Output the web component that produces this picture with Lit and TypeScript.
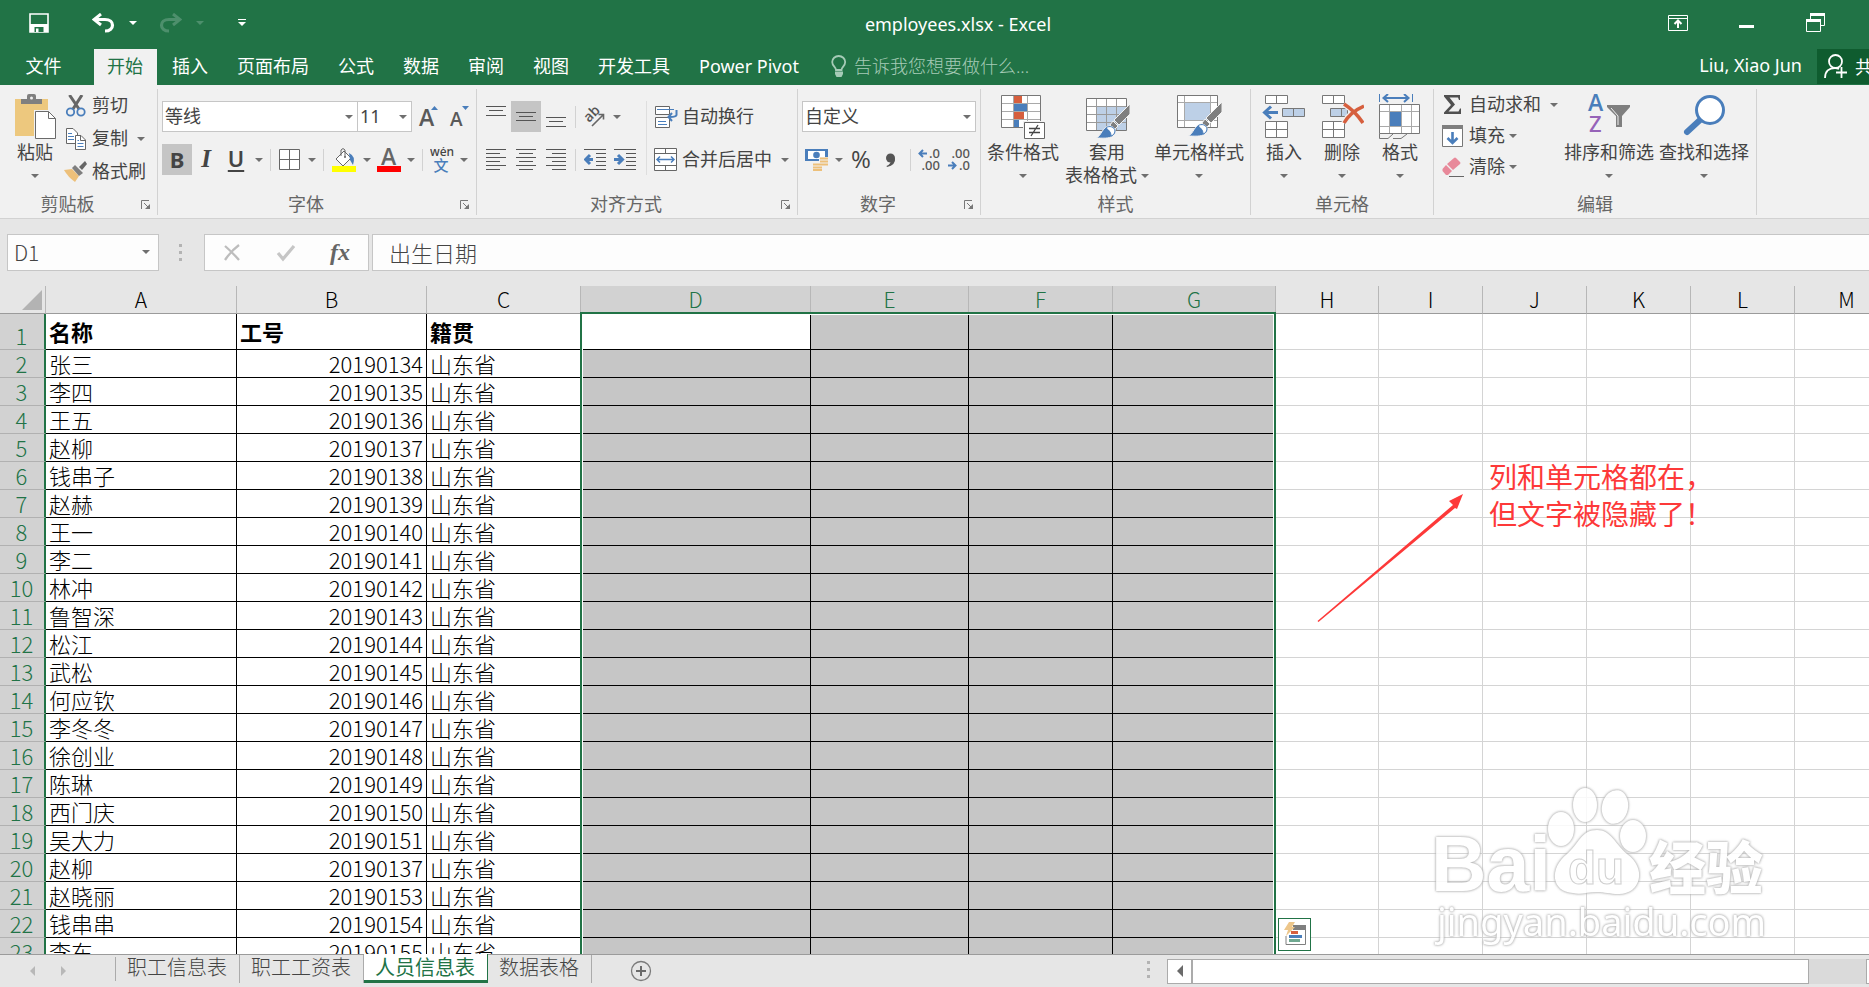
import { LitElement, html, svg, css, nothing, TemplateResult } from "lit";
import { customElement, state } from "lit/decorators.js";
import { classMap } from "lit/directives/class-map.js";

const BLUE = "#4a7ebb";

const icon = (w: number, h: number, body: unknown) =>
  html`<svg width=${w} height=${h} viewBox="0 0 ${w} ${h}" fill="none" aria-hidden="true">${body}</svg>`;

const lines = (rows: number[][], stroke = "#555") =>
  rows.map(([x1, x2, y]) => svg`<path d="M${x1} ${y}.5H${x2}" stroke=${stroke} stroke-width="1"/>`);

const brush = svg`
  <path d="M45 9V19L34 30L29 25Z" fill="#7f7f7f" stroke="#f1f1f1" stroke-width="1"/>
  <path d="M28 26L33 31L29 35L25 30Z" fill="#7f7f7f" stroke="#f1f1f1" stroke-width="1"/>
  <path d="M11 43C17 41 17 31 25 31C31 32 32 38 28 41C24 44 17 43 11 43Z" fill="${BLUE}" stroke="#f1f1f1" stroke-width="1"/>
  <path d="M21 33C24 30 30 32 30 36C30 39 27 41 26 41C26 38 25 36 21 33Z" fill="#fff" stroke="${BLUE}" stroke-width="1"/>`;

const icons: Record<string, TemplateResult> = {
  save: icon(20, 20, svg`<path d="M1 1H19V19H1Z" stroke="#fff" stroke-width="1.6"/><path d="M1 11H19V19H1Z" fill="#fff"/><path d="M5.5 14H14.5V19H5.5Z" fill="#217346"/><path d="M7 15.5H9.500V19H7Z" fill="#fff"/>`),
  undo: icon(23, 20, svg`<path d="M9 1L2 6.500L9 12" stroke="#fff" stroke-width="3"/><path d="M3 6.500H13C23 6.500 23 18 13 18" stroke="#fff" stroke-width="3.200"/>`),
  redo: icon(23, 20, svg`<path d="M14 1L21 6.500L14 12" stroke="#4d8f6c" stroke-width="3"/><path d="M20 6.500H10C0 6.500 0 18 10 18" stroke="#4d8f6c" stroke-width="3.200"/>`),
  custom: icon(8, 8, svg`<path d="M0 .5H8" stroke="#fff"/><path d="M0 3H8L4 7Z" fill="#fff"/>`),
  display: icon(20, 16, svg`<path d="M.5 .5H19.500V15.500H.5ZM.5 3.500H19.500" stroke="#fff"/><path d="M10 13V6M6.500 9L10 5.500L13.500 9" stroke="#fff" stroke-width="2"/>`),
  min: icon(16, 4, svg`<path d="M0 0H15V3H0Z" fill="#fff"/>`),
  restore: icon(20, 20, svg`<path d="M4.500 6V.5H18.500V12.500H15" stroke="#fff"/><path d="M4 0H19V3H4Z" fill="#fff"/><path d="M.5 6.500H14.500V18.500H.5Z" stroke="#fff"/><path d="M0 6H15V9H0Z" fill="#fff"/>`),
  bulb: icon(16, 23, svg`<path d="M5 15C5 12 1.200 11 1.200 7A6.500 6 0 0 1 14.200 7C14.200 11 10.500 12 10.500 15Z" stroke="#a6cbb7" stroke-width="1.800"/><path d="M4 16.500H12V19L10.500 22H5.500L4 19Z" fill="#a6cbb7"/>`),
  person: icon(24, 25, svg`<circle cx="11.500" cy="7.500" r="6.500" stroke="#fff" stroke-width="1.800"/><path d="M1 24C1 17 5 14 11 14C13 14 14 14.500 15 15M12 18.500H23M17.500 13V24" stroke="#fff" stroke-width="1.800"/>`),
  paste: icon(44, 46, svg`<path d="M2 5H35V42H2Z" fill="#edc87e"/><path d="M8 10V5H14V2Q14 0 16 0H21Q23 0 23 2V5H29V10Z" fill="#7f7f7f"/><circle cx="18.500" cy="4" r="1.500" fill="#f1f1f1"/><path d="M21 16H36L44 24V46H21Z" fill="#f1f1f1"/><path d="M22.500 17.500H35.500L42.500 24.500V44.500H22.500Z" fill="#fff" stroke="#6a6a6a"/><path d="M35.500 17.500V24.500H42.500" stroke="#6a6a6a"/>`),
  cut: icon(22, 22, svg`<path d="M4.500 0L14 14M17 0L8 14" stroke="#666" stroke-width="3"/><circle cx="5.500" cy="17" r="3.700" stroke="${BLUE}" stroke-width="1.800"/><circle cx="16" cy="17" r="3.700" stroke="${BLUE}" stroke-width="1.800"/>`),
  copy: icon(22, 22, svg`<path d="M1.500 .5H8L12.500 5V15.500H1.500Z" fill="#fff" stroke="#666"/><path d="M3 5.500H7M3 8.500H9M3 11.500H9" stroke="${BLUE}"/><path d="M10.500 7.500H16L20.500 12V21.500H10.500Z" fill="#fff" stroke="#666"/><path d="M15.500 7.500V12.500H20" stroke="#666"/><path d="M12.500 12.500H14M12.500 15.500H18.500M12.500 18.500H18.500" stroke="${BLUE}"/>`),
  painter: icon(24, 22, svg`<path d="M0 9L8 8L15 15L11 21Q4 16 0 9Z" fill="#edc07a"/><path d="M8 7L11 4L19 12L15 15Z" fill="#7f7f7f"/><path d="M15 6L21 0L23 3L18 9Z" fill="#666"/>`),
  growA: icon(20, 22, svg`<text x="1" y="20" font-size="23" font-weight="600" fill="#595959" font-family="Open Sans, sans-serif">A</text><path d="M13 4L16.500 0L20 4Z" fill="${BLUE}"/>`),
  shrinkA: icon(20, 22, svg`<text x="1" y="20" font-size="19" font-weight="600" fill="#595959" font-family="Open Sans, sans-serif">A</text><path d="M13 0H20L16.500 4Z" fill="${BLUE}"/>`),
  borders: icon(22, 22, svg`<path d="M.5 .5H20.500V20.500H.5Z" fill="#fff" stroke="#666"/><path d="M10.500 1V20M1 10.500H20" stroke="#666"/>`),
  fill: icon(24, 24, svg`<path d="M4 11L12 3L19 10L11 18Z" fill="#fff" stroke="#666"/><path d="M9 8V2Q11 -1 13 2V9" stroke="#666"/><circle cx="13" cy="9" r="1" fill="#666"/><path d="M17 5Q24 8 21 17L18 12Z" fill="${BLUE}"/><path d="M0 18H24V24H0Z" fill="#ff0"/>`),
  color: icon(24, 24, svg`<text x="4" y="17" font-size="23" font-weight="600" fill="#666" font-family="Open Sans, sans-serif">A</text><path d="M0 18H24V24H0Z" fill="#f00"/>`),
  wen: icon(24, 26, svg`<text x="12" y="9" text-anchor="middle" font-size="12" font-weight="500" fill="#444" font-family="Noto Sans, sans-serif">wén</text><text x="11" y="24" text-anchor="middle" font-size="15" font-weight="500" fill="${BLUE}" font-family="Noto Sans CJK SC, sans-serif">文</text>`),
  top: icon(20, 24, lines([[0, 20, 1], [3, 17, 5], [0, 20, 10]])),
  middle: icon(20, 24, lines([[0, 20, 7], [3, 17, 11], [0, 20, 15]])),
  bottom: icon(20, 24, lines([[0, 20, 12], [3, 17, 16], [0, 20, 21]])),
  left: icon(20, 22, lines([[0, 20, 0], [0, 14, 4], [0, 20, 8], [0, 14, 12], [0, 20, 16], [0, 14, 20]])),
  center: icon(20, 22, lines([[0, 20, 0], [3, 17, 4], [0, 20, 8], [3, 17, 12], [0, 20, 16], [3, 17, 20]])),
  right: icon(20, 22, lines([[0, 20, 0], [6, 20, 4], [0, 20, 8], [6, 20, 12], [0, 20, 16], [6, 20, 20]])),
  orient: icon(22, 22, svg`<text transform="translate(5 17) rotate(-45)" font-size="14" font-weight="600" fill="#555" font-family="Open Sans, sans-serif">ab</text><path d="M8 20L19 9M14.500 8.500H19.500V13.500" stroke="#666" stroke-width="1.600"/>`),
  outdent: icon(22, 22, svg`${lines([[0, 22, 0], [12, 22, 4], [12, 22, 8], [12, 22, 12], [12, 22, 16], [0, 22, 20]])}<path d="M2 10.500H9M6 6L1.500 10.500L6 15" stroke="${BLUE}" stroke-width="3"/>`),
  indent: icon(22, 22, svg`${lines([[0, 22, 0], [12, 22, 4], [12, 22, 8], [12, 22, 12], [12, 22, 16], [0, 22, 20]])}<path d="M0 10.500H7M4 6L8.500 10.500L4 15" stroke="${BLUE}" stroke-width="3"/>`),
  wrap: icon(24, 24, svg`<path d="M1.500 1.500H15.500V9.500H1.500ZM1.500 12.500H15.500V22.500H1.500Z" fill="#fff" stroke="#666"/><path d="M3 4.500H20M4 16.500H12M4 19.500H13" stroke="${BLUE}"/><path d="M22.500 5V10Q22 12 16 12M18 8L14.500 12L18 16" stroke="${BLUE}" stroke-width="2"/>`),
  merge: icon(24, 24, svg`<path d="M.5 .5H22.500V22.500H.5Z" fill="#fff" stroke="#666"/><path d="M.5 5.500H22.500M.5 17.500H22.500M11.500 .5V5M11.500 18V22.500" stroke="#666"/><path d="M3 11.500H20M6 8.500L3 11.500L6 14.500M17 8.500L20 11.500L17 14.500" stroke="${BLUE}" stroke-width="1.500"/>`),
  money: icon(24, 24, svg`<path d="M0 1H23V13H0Z" fill="${BLUE}"/><path d="M3 3H20V11H3Z" fill="#fff"/><circle cx="11.500" cy="7" r="3.300" fill="${BLUE}"/><path d="M14 9H24V21H14Z" fill="#f1f1f1"/><path d="M15 10.500H23M15 13.500H23M15 16.500H23M8 16.500H16M8 19.500H17M8 22H17" stroke="#edc07a" stroke-width="2"/>`),
  comma: icon(12, 16, svg`<circle cx="5.500" cy="6" r="4.500" fill="#555"/><path d="M10 6Q11 13 2 15L1.500 14Q6 12 6 8Z" fill="#555"/>`),
  incDec: icon(24, 24, svg`<path d="M9 5.500H2M5 2L1.500 5.500L5 9" stroke="${BLUE}" stroke-width="2"/><text x="22" y="10" text-anchor="end" font-size="13" font-weight="500" fill="#555" font-family="Noto Sans, sans-serif">.0</text><text x="22" y="22" text-anchor="end" font-size="13" font-weight="500" fill="#555" font-family="Noto Sans, sans-serif">.00</text>`),
  decDec: icon(24, 24, svg`<text x="22" y="10" text-anchor="end" font-size="13" font-weight="500" fill="#555" font-family="Noto Sans, sans-serif">.00</text><path d="M0 17.500H7M4 14L7.500 17.500L4 21" stroke="${BLUE}" stroke-width="2"/><text x="22" y="22" text-anchor="end" font-size="13" font-weight="500" fill="#555" font-family="Noto Sans, sans-serif">.0</text>`),
  cond: icon(44, 46, svg`<path d="M.5 1.500H39.500V33.500H.5Z" fill="#fff"/><path d="M12.500 1.500V33M26.500 1.500V33M.5 9.500H39.500M.5 17.500H39.500M.5 25.500H39.500" stroke="#a9a9a9"/><path d="M.5 1.500H39.500V33.500H.5Z" stroke="#777"/><path d="M13 2H21V9H13ZM13 18H23V25H13Z" fill="#d65f3e"/><path d="M13 10H26V17H13ZM13 26H18V33H13Z" fill="${BLUE}"/><path d="M22 27H44V46H22Z" fill="#f1f1f1"/><path d="M23.500 28.500H43.500V44.500H23.500Z" fill="#fff" stroke="#666"/><path d="M28 34.500H39M28 38.500H39M37 31L30 42" stroke="#444" stroke-width="1.300"/>`),
  tableFmt: icon(46, 46, svg`<path d="M2.500 4.500H42.500V36.500H2.500Z" fill="#fff"/><path d="M13 12H42V36H13Z" fill="#bdd0e7"/><path d="M12.500 4V36M22.500 4V36M32.500 4V36M2.500 12.500H42M2.500 20.500H42M2.500 28.500H42" stroke="#9a9a9a"/><path d="M2.500 4.500H42.500V36.500H2.500Z" stroke="#777"/><g transform="translate(1 1)">${brush}</g>`),
  cellStyle: icon(46, 46, svg`<path d="M1.500 1.500H41.500V33.500H1.500Z" fill="#fff"/><path d="M8.500 1.500V33M34.500 1.500V33M1.500 8.500H41M1.500 26.500H41" stroke="#a9a9a9"/><path d="M9 9H34V26H9Z" fill="#bdd0e7"/><path d="M1.500 1.500H41.500V33.500H1.500Z" stroke="#777"/><g transform="translate(1 -1)">${brush}</g>`),
  insert: icon(44, 46, svg`<path d="M3.500 1.500H25.500V9.500H3.500ZM3.500 27.500H25.500V43.500H3.500Z" fill="#fff" stroke="#777"/><path d="M14.500 1V9M14.500 27V43M3 35.500H25" stroke="#777"/><path d="M20.500 14.500H42.500V22.500H20.500Z" fill="#bdd0e7" stroke="#777"/><path d="M31.500 14V22" stroke="#777"/><path d="M16 18.500H3M9 12.500L2.500 18.500L9 24.500" stroke="${BLUE}" stroke-width="3"/>`),
  remove: icon(44, 46, svg`<path d="M2.500 1.500H24.500V9.500H2.500ZM2.500 27.500H24.500V43.500H2.500Z" fill="#fff" stroke="#777"/><path d="M13.500 1V9M13.500 27V43M2 35.500H24" stroke="#777"/><path d="M10.500 14.500H27.500V22.500H10.500Z" fill="#bdd0e7" stroke="#777"/><path d="M21.500 14V22" stroke="#777"/><path d="M24 10Q35 17 43 29M44 12Q30 18 24 29" stroke="#f1f1f1" stroke-width="6"/><path d="M24 10Q35 17 43 29M44 12Q30 18 24 29" stroke="#d65f3e" stroke-width="3.500"/>`),
  format: icon(42, 46, svg`<path d="M.5 0V8M33.500 0V8" stroke="${BLUE}"/><path d="M5 4H29M9 0L4.500 4L9 8M25 0L29.500 4L25 8" stroke="${BLUE}" stroke-width="2"/><path d="M.5 10.500H40.500V39.500H.5Z" fill="#fff"/><path d="M10.500 10V39M22.500 10V39M32.500 10V39M.5 17.500H40M.5 32.500H40" stroke="#a9a9a9"/><path d="M11 18H22V32H11Z" fill="${BLUE}"/><path d="M.5 10.500H40.500V39.500H.5Z" stroke="#777"/><path d="M.5 39.500V44.500H9L14 40M14 44.500H22L28 40" stroke="#777"/>`),
  sum: icon(20, 20, svg`<path d="M1 0H17V5H16L15 2.500H6.500L12 9.500L5.500 16.500H15.500L17 13.500H18V19H1V17.500L8 10L1 1.500Z" fill="#505050"/>`),
  down: icon(22, 24, svg`<path d="M.5 1.500H20.500V22.500H.5Z" fill="#fff" stroke="#777"/><path d="M0 1H21V5H0Z" fill="#7f7f7f"/><path d="M10.500 8V19M5.500 14L10.500 19L15.500 14" stroke="${BLUE}" stroke-width="2.600"/>`),
  erase: icon(22, 20, svg`<path d="M12 1Q13 0 14 1L18 5Q19 6 18 7L11 13L5 7Z" fill="#e8899a"/><path d="M4 8L10 14L6 18Q5 18 4 18L.5 14V12Z" fill="#e8899a"/><path d="M7 19.500H22" stroke="#666"/>`),
  sort: icon(44, 42, svg`<text x="1" y="17" font-size="23" font-weight="600" fill="${BLUE}" font-family="Open Sans, sans-serif">A</text><text x="2" y="38" font-size="22" font-weight="500" fill="#9663b8" font-family="Noto Sans, sans-serif">Z</text><path d="M20 11H43V13L35 22V33H29V22L20 13Z" fill="#7f7f7f"/><path d="M24 14L31 22V31" stroke="#f1f1f1"/>`),
  find: icon(42, 42, svg`<path d="M4 38L17 26" stroke="${BLUE}" stroke-width="6" stroke-linecap="round"/><circle cx="27" cy="16" r="13.500" fill="#fff" stroke="${BLUE}" stroke-width="3"/>`),
  launch: icon(10, 10, svg`<path d="M.5 9V.5H8" stroke="#777"/><path d="M3 3L8 8" stroke="#777"/><path d="M9 4V9H4Z" fill="#777"/>`),
  cancel: icon(18, 18, svg`<path d="M2 2Q9 8 16 16M16 1Q8 7 2 16" stroke="#bdbdbd" stroke-width="2.300"/>`),
  accept: icon(20, 18, svg`<path d="M2 9L7 15L18 2" stroke="#c6c6c6" stroke-width="3.200"/>`),
  flash: icon(24, 26, svg`<path d="M3 14V22.500H22.500V4" stroke="#7f7f7f"/><path d="M10 3H23V8H10Z" fill="#7f7f7f"/><path d="M8 9H15V12H8Z" fill="#d65f3e"/><path d="M6 13H19V16H6Z" fill="${BLUE}"/><path d="M6 17H17V20H6Z" fill="#6fa890"/><path d="M6 0H12L9 5H12L3 14L5 8H1Z" fill="#edc68a"/>`),
  plus: icon(22, 22, svg`<circle cx="11" cy="11" r="9.500" stroke="#7a7a7a" stroke-width="1.300"/><path d="M11 6V16M6 11H16" stroke="#6a6a6a" stroke-width="2"/>`),
};

const columns = [
  { name: "A", w: 191 }, { name: "B", w: 190 }, { name: "C", w: 154 },
  { name: "D", w: 230, sel: true }, { name: "E", w: 158, sel: true },
  { name: "F", w: 144, sel: true }, { name: "G", w: 163, sel: true },
  { name: "H", w: 103 }, { name: "I", w: 104 }, { name: "J", w: 104 },
  { name: "K", w: 104 }, { name: "L", w: 104 }, { name: "M", w: 104 },
];

const people: [string, string][] = [
  ["张三", "20190134"], ["李四", "20190135"], ["王五", "20190136"], ["赵柳", "20190137"],
  ["钱串子", "20190138"], ["赵赫", "20190139"], ["王一", "20190140"], ["李二", "20190141"],
  ["林冲", "20190142"], ["鲁智深", "20190143"], ["松江", "20190144"], ["武松", "20190145"],
  ["何应钦", "20190146"], ["李冬冬", "20190147"], ["徐创业", "20190148"], ["陈琳", "20190149"],
  ["西门庆", "20190150"], ["吴大力", "20190151"], ["赵柳", "20190137"], ["赵晓丽", "20190153"],
  ["钱串串", "20190154"], ["李东", "20190155"],
];

const shared = css`
  :host { font-family: "Noto Sans", "Noto Sans CJK SC", sans-serif; font-size: 18px; color: #444; }
  * { box-sizing: border-box; }
  button, input, select { font: inherit; color: inherit; border: 0; padding: 0; margin: 0; background: none; border-radius: 0; outline: none; }
  button { display: flex; align-items: center; justify-content: center; white-space: nowrap; }
  svg { display: block; flex: none; }
  .caret { width: 0; height: 0; border: 4px solid transparent; border-top-color: #6f6f6f; border-bottom: 0; flex: none; }
`;

@customElement("excel-ribbon")
class ExcelRibbon extends LitElement {
  static styles = [shared, css`
    :host { display: flex; height: 134px; padding-top: 4px; background: #f1f1f1; border-bottom: 1px solid #d2d2d2; overflow: hidden; }
    .group { flex: none; display: flex; flex-direction: column; height: 126px; border-right: 1px solid #d2d2d2; }
    .g158 { width: 158px; } .g183 { width: 183px; } .g270 { width: 270px; }
    .g319 { width: 319px; } .g321 { width: 321px; } .g323 { width: 323px; }
    .body { display: flex; height: 105px; }
    .foot { display: flex; align-items: center; height: 21px; line-height: 21px; color: #666; text-align: center; }
    .foot span { flex: 1; }
    .foot button { width: 22px; height: 21px; }
    .pad2 { padding-left: 2px; } .pad4 { padding-left: 4px; } .pad7 { padding-left: 7px; } .pad8 { padding-left: 8px; }
    .rows { display: flex; flex-direction: column; gap: 12px; padding-top: 12px; }
    .row { display: flex; height: 31px; align-items: center; }
    .tool { height: 31px; width: 30px; flex: none; }
    .n28 { width: 28px; } .n32 { width: 32px; }
    .drop { width: 14px; height: 31px; flex: none; }
    .on { background: #c5c5c5; }
    .sep { width: 1px; height: 22px; margin: 0 4px; background: #d2d2d2; flex: none; }
    .rule { width: 1px; height: 74px; margin: 12px 7px 0 6px; background: #dedede; }
    .combo { position: relative; display: block; height: 31px; background: #fff; border: 1px solid #c6c6c6; }
    .combo select { appearance: none; width: 100%; height: 28px; line-height: 26px; padding-left: 2px; }
    .combo .caret { position: absolute; right: 4px; top: 13px; pointer-events: none; }
    .c196 { width: 196px; } .c54 { width: 55px; margin-left: -1px; } .c174 { width: 174px; }
    .small { justify-content: flex-start; gap: 4px; height: 31px; line-height: 24px; }
    .small .label { padding-bottom: 2px; }
    .tall { height: 33px; }
    .ico { width: 24px; display: flex; justify-content: center; }
    .gap .caret { margin-left: 5px; }
    .stack { display: flex; flex-direction: column; align-items: flex-start; }
    .w88 { width: 88px; } .w94 { width: 94px; } .w96 { width: 96px; } .w80 { width: 80px; }
    .w58 { width: 58px; } .w52 { width: 54px; } .w121 { width: 121px; } .w64 { margin-left: 2px; }
    .big { flex-direction: column; justify-content: flex-start; padding-top: 5px; flex: none; }
    .pic { height: 47px; display: flex; }
    .line { height: 23px; line-height: 23px; display: flex; align-items: center; gap: 4px; }
    .glyph-b { font-weight: 700; font-size: 22px; line-height: 26px; padding-bottom: 2px; }
    .glyph-i { font: italic 700 25px "Liberation Serif", serif; padding-bottom: 2px; }
    .glyph-u { font-weight: 600; font-size: 22px; line-height: 26px; padding-bottom: 4px; text-decoration: underline; text-decoration-thickness: 2px; text-underline-offset: 3px; }
    .glyph-p { font-size: 24px; line-height: 26px; padding-bottom: 2px; font-family: "Open Sans", sans-serif; }
  `];

  private tool(name: string, label: string, extra = "") {
    return html`<button class="tool ${extra}" aria-label=${label}>${icons[name]}</button>`;
  }
  private drop(label: string) {
    return html`<button class="drop" aria-label="${label}选项"><span class="caret"></span></button>`;
  }
  private small(name: string, label: string, caret = false, extra = "") {
    return html`<button class="small ${extra}"><span class="ico">${icons[name]}</span><span class="label">${label}</span>${caret ? html`<span class="caret"></span>` : nothing}</button>`;
  }
  private big(name: string, label: string, w: string, second = "") {
    return html`<button class="big ${w}"><span class="pic">${icons[name]}</span><span class="line">${label}</span><span class="line">${second}<span class="caret"></span></span></button>`;
  }
  private group(label: string, w: string, pad: string, body: unknown, launch = true) {
    return html`<section class="group ${w}" aria-label=${label}>
      <div class="body ${pad}">${body}</div>
      <div class="foot"><span>${label}</span>${launch ? html`<button aria-label="${label}设置">${icons.launch}</button>` : nothing}</div>
    </section>`;
  }
  private combo(label: string, value: string, w: string) {
    return html`<label class="combo ${w}"><select aria-label=${label}><option>${value}</option></select><span class="caret"></span></label>`;
  }

  render() {
    const sep = html`<span class="sep"></span>`;
    return html`
      ${this.group("剪贴板", "g158", "pad8", html`
        ${this.big("paste", "粘贴", "w52")}
        <div class="stack w64">
          ${this.small("cut", "剪切", false, "tall")}
          ${this.small("copy", "复制", true, "tall gap")}
          ${this.small("painter", "格式刷", false, "tall")}
        </div>`)}
      ${this.group("字体", "g319", "pad4", html`<div class="rows">
        <div class="row">${this.combo("字体", "等线", "c196")}${this.combo("字号", "11", "c54")}${this.tool("growA", "增大字号", "n32")}${this.tool("shrinkA", "减小字号")}</div>
        <div class="row">
          <button class="tool on glyph-b">B</button><button class="tool n28 glyph-i">I</button><button class="tool n32 glyph-u">U</button>${this.drop("下划线")}
          ${sep}${this.tool("borders", "边框")}${this.drop("边框")}
          ${sep}${this.tool("fill", "填充颜色", "n32")}${this.drop("填充颜色")}${this.tool("color", "字体颜色")}${this.drop("字体颜色")}
          ${sep}${this.tool("wen", "拼音")}${this.drop("拼音")}
        </div></div>`)}
      ${this.group("对齐方式", "g321", "pad4", html`
        <div class="rows">
          <div class="row">${this.tool("top", "顶端对齐")}${this.tool("middle", "垂直居中", "on")}${this.tool("bottom", "底端对齐")}${sep}${this.tool("orient", "方向")}${this.drop("方向")}</div>
          <div class="row">${this.tool("left", "左对齐")}${this.tool("center", "居中")}${this.tool("right", "右对齐")}${sep}${this.tool("outdent", "减少缩进量")}${this.tool("indent", "增加缩进量")}</div>
        </div>
        <span class="rule"></span>
        <div class="rows">
          ${this.small("wrap", "自动换行")}
          ${this.small("merge", "合并后居中", true, "gap")}
        </div>`)}
      ${this.group("数字", "g183", "pad4", html`<div class="rows">
        ${this.combo("数字格式", "自定义", "c174")}
        <div class="row">
          ${this.tool("money", "会计数字格式")}${this.drop("会计数字格式")}
          <button class="tool glyph-p">%</button>${this.tool("comma", "千位分隔样式")}
          ${sep}${this.tool("incDec", "增加小数位数")}${this.tool("decDec", "减少小数位数")}
        </div></div>`)}
      ${this.group("样式", "g270", "pad2", html`
        ${this.big("cond", "条件格式", "w80")}
        ${this.big("tableFmt", "套用", "w88", "表格格式")}
        ${this.big("cellStyle", "单元格样式", "w96")}`, false)}
      ${this.group("单元格", "g183", "pad4", html`
        ${this.big("insert", "插入", "w58")}${this.big("remove", "删除", "w58")}${this.big("format", "格式", "w58")}`, false)}
      ${this.group("编辑", "g323", "pad7", html`
        <div class="stack w121">
          ${this.small("sum", "自动求和", true, "gap")}
          ${this.small("down", "填充", true)}
          ${this.small("erase", "清除", true)}
        </div>
        ${this.big("sort", "排序和筛选", "w94")}
        ${this.big("find", "查找和选择", "w96")}`, false)}
    `;
  }
}

@customElement("excel-grid")
class ExcelGrid extends LitElement {
  static styles = [shared, css`
    :host { display: block; position: relative; overflow: hidden; background: #fff; font-family: "Noto Sans CJK SC", sans-serif; font-weight: 300; font-size: 22px; color: #000; }
    table { border-collapse: separate; border-spacing: 0; table-layout: fixed; width: 0; }
    .rowhead { width: 46px; }
    th, td { padding: 0; height: 28px; line-height: 27px; overflow: hidden; white-space: nowrap; font-weight: 300; }
    thead th { background: #e6e6e6; border-right: 1px solid #b7b7b7; border-bottom: 1px solid #9b9b9b; font-size: 21px; }
    thead .sel { background: #d2d2d2; color: #217346; }
    .corner svg { margin: 0 0 0 22px; }
    tbody th { background: #d2d2d2; color: #217346; border-right: 2px solid #217346; border-bottom: 1px solid #b1b1b1; text-align: center; padding-right: 1px; }
    td { border-right: 1px solid #000; border-bottom: 1px solid #000; padding: 0 3px; }
    .shade { background: #c6c6c6; }
    .num { text-align: right; }
    .free { border-color: #d4d4d4; }
    .first th, .first td { height: 36px; font-weight: 700; }
    .first th { font-weight: 300; vertical-align: bottom; }
    .first .shade.active { background: #fff; }
    .selection { position: absolute; left: 580px; top: 26px; width: 696px; height: 100%; border: 2px solid #217346; box-shadow: inset 0 0 0 1px #fff; pointer-events: none; }
    .tag { position: absolute; left: 1278px; top: 632px; width: 33px; height: 33px; border: 1px solid #217346; background: #fff; }
    .note { position: absolute; left: 1489px; top: 172px; margin: 0; font-size: 28px; line-height: 37px; font-weight: 400; color: #fd3939; white-space: nowrap; }
    .arrow { position: absolute; left: 1316px; top: 206px; }
    .mark { position: absolute; left: 1425px; top: 490px; opacity: 0.85; filter: drop-shadow(0 0 1px #aaa) drop-shadow(0 0 1px #bbb); pointer-events: none; }
  `];

  render() {
    return html`
      <table>
        <colgroup><col class="rowhead">${columns.map(c => html`<col style="width:${c.w}px">`)}</colgroup>
        <thead><tr>
          <th class="corner">${icon(20, 20, svg`<path d="M20 0V20H0Z" fill="#b3b3b3"/>`)}</th>
          ${columns.map(c => html`<th scope="col" class=${classMap({ sel: !!c.sel })}>${c.name}</th>`)}
        </tr></thead>
        <tbody>
          ${this.row(1, ["名称", "工号", "籍贯"])}
          ${people.map(([n, id], i) => this.row(i + 2, [n, id, "山东省"]))}
        </tbody>
      </table>
      <div class="selection"></div>
      <button class="tag" aria-label="快速分析">${icons.flash}</button>
      <svg class="arrow" width="150" height="132" viewBox="0 0 150 132"><path d="M1.500 129L137 13L133 9L147 2L141 17L139 16L2.500 130Z" fill="#fd3939"/></svg>
      <p class="note">列和单元格都在，<br>但文字被隐藏了！</p>
      <svg class="mark" width="360" height="180" viewBox="0 0 360 180" fill="#fff">
        <text x="6" y="115" font-size="77" font-weight="700" font-family="Liberation Sans, sans-serif">Bai</text>
        <ellipse cx="136" cy="53" rx="13" ry="17"/><ellipse cx="160" cy="29" rx="12" ry="17"/>
        <ellipse cx="190" cy="31" rx="13" ry="17" transform="rotate(12 190 31)"/><ellipse cx="208" cy="60" rx="13" ry="16"/>
        <path d="M172 54C186 54 190 68 202 78C222 92 216 118 194 118C184 118 180 116 172 116C162 116 156 119 148 117C126 116 124 92 142 78C154 68 156 54 172 54Z"/>
        <text x="171" y="108" text-anchor="middle" font-size="46" font-weight="700" font-family="Liberation Sans, sans-serif" stroke="#c8c8c8" stroke-width="1">du</text>
        <text x="224" y="113" font-size="57" font-weight="900" font-family="Noto Sans CJK SC, sans-serif">经验</text>
        <text x="12" y="160" font-size="38" font-weight="400" font-family="Noto Sans, sans-serif">jingyan.baidu.com</text>
      </svg>`;
  }

  private row(n: number, values: string[]) {
    return html`<tr class=${n === 1 ? "first" : ""}>
      <th scope="row">${n}</th>
      ${columns.map((c, i) => html`<td class=${classMap({
        num: n > 1 && i === 1, shade: !!c.sel, active: n === 1 && c.name === "D", free: i > 6,
      })}>${values[i] ?? nothing}</td>`)}
    </tr>`;
  }
}

@customElement("app-root")
class AppRoot extends LitElement {
  @state() private tab = "开始";
  @state() private sheet = "人员信息表";

  static styles = [shared, css`
    :host { display: flex; flex-direction: column; height: 100vh; overflow: hidden; background: #e6e6e6; }
    .title { display: flex; align-items: flex-start; height: 49px; flex: none; background: #217346; color: #fff; }
    .title .caret { border-top-color: #fff; }
    .quick { display: flex; align-items: center; width: 260px; height: 46px; padding-left: 29px; }
    .quick .undo { margin-left: 43px; }
    .quick .redo { margin-left: 22px; }
    .quick .more { margin-left: 34px; }
    .quick .gapped { margin-left: 14px; }
    .quick .dim { border-top-color: #4d8f6c; }
    .name { flex: 1; text-align: center; margin: 0; font-size: 18px; font-weight: 400; line-height: 48px; }
    .window { display: flex; align-items: center; width: 213px; height: 46px; padding-left: 12px; overflow: hidden; }
    .window .min { margin: 7px 51px 0 51px; }
    nav { display: flex; height: 36px; flex: none; background: #217346; color: #fff; gap: 1px; overflow: hidden; }
    nav button { padding: 0 14px 3px; height: 36px; flex: none; line-height: 24px; }
    nav .file { width: 93px; padding: 0 32px 3px 26px; }
    nav .on { background: #f1f1f1; color: #217346; padding-left: 13px; }
    .tell { display: flex; align-items: center; gap: 7px; margin-left: 17px; color: #a6cbb7; flex: 1; padding-bottom: 2px; }
    .tell input { width: 220px; height: 32px; }
    .tell input::placeholder { color: #a6cbb7; opacity: 1; font-weight: 300; }
    .user { font-size: 18px; line-height: 33px; margin-right: 14px; }
    .share { width: 52px; }
    nav .share { background: #0f5c2f; justify-content: flex-start; padding: 0 0 0 7px; gap: 7px; height: 35px; overflow: hidden; }
    .formula { display: flex; align-items: stretch; height: 37px; flex: none; margin: 15px 0 15px 7px; font-family: "Noto Sans CJK SC", sans-serif; font-weight: 300; font-size: 22px; }
    .box { display: flex; align-items: center; background: #fdfdfd; border: 1px solid #c6c6c6; }
    .ref { width: 152px; padding: 0 8px 2px 6px; }
    .ref input { flex: 1; min-width: 0; font-size: 21px; height: 33px; }
    .dots { display: flex; flex-direction: column; justify-content: center; gap: 4px; width: 3px; }
    .dots i { width: 3px; height: 3px; background: #b3b3b3; }
    .ref + .dots { margin: 0 22px 0 20px; }
    .acts { width: 165px; padding: 0 18px; justify-content: space-between; }
    .fx { font: italic 700 24px "Liberation Serif", serif; color: #666; }
    .value { flex: 1; margin-left: 3px; border-right: 0; padding: 0 0 2px 16px; }
    .value input { width: 100%; height: 33px; }
    excel-grid { flex: 1; min-height: 0; }
    footer { display: flex; align-items: flex-start; height: 33px; flex: none; border-top: 1px solid #9b9b9b; }
    .move { display: flex; width: 116px; height: 24px; padding: 4px 0 0 29px; gap: 26px; align-items: center; margin-top: 2px; border-right: 1px solid #ababab; }
    .sheets { display: flex; font-size: 20px; font-family: "Noto Sans CJK SC", sans-serif; font-weight: 300; }
    .sheets button { height: 28px; line-height: 24px; padding: 0 12px 4px 11px; border-right: 1px solid #ababab; }
    .sheets .on { background: #fff; color: #217346; border-bottom: 3px solid #217346; font-weight: 400; padding-bottom: 1px; border-right-color: #217346; margin-top: -1px; height: 29px; }
    .add { margin: 5px 0 0 38px; }
    .fill { flex: 1; }
    .scroll { display: flex; width: 702px; height: 25px; margin-top: 3px; background: #dadada; }
    .scroll button { background: #fff; border: 1px solid #ababab; height: 25px; }
    .scroll .back { width: 25px; }
    .scroll .thumb { width: 617px; }
    .scroll .fwd { width: 25px; margin-left: auto; margin-right: -22px; }
    .hscroll { overflow: hidden; display: flex; align-items: center; gap: 17px; }
    .hscroll .dots { height: 29px; }
  `];

  render() {
    const tabs = ["开始", "插入", "页面布局", "公式", "数据", "审阅", "视图", "开发工具", "Power Pivot"];
    const sheets = ["职工信息表", "职工工资表", "人员信息表", "数据表格"];
    const dots = html`<span class="dots"><i></i><i></i><i></i></span>`;
    return html`
      <header class="title">
        <div class="quick">
          <button aria-label="保存">${icons.save}</button>
          <button class="undo" aria-label="撤消">${icons.undo}</button><span class="caret gapped"></span>
          <button class="redo" aria-label="恢复">${icons.redo}</button><span class="caret gapped dim"></span>
          <button class="more" aria-label="自定义快速访问工具栏">${icons.custom}</button>
        </div>
        <h1 class="name">employees.xlsx - Excel</h1>
        <div class="window">
          <button aria-label="功能区显示选项">${icons.display}</button>
          <button class="min" aria-label="最小化">${icons.min}</button>
          <button aria-label="还原">${icons.restore}</button>
        </div>
      </header>
      <nav>
        <button class="file">文件</button>
        ${tabs.map(t => html`<button class=${classMap({ on: t === this.tab })} @click=${() => (this.tab = t)}>${t}</button>`)}
        <label class="tell">${icons.bulb}<input aria-label="操作说明搜索" placeholder="告诉我您想要做什么..."></label>
        <span class="user">Liu, Xiao Jun</span>
        <button class="share">${icons.person}共享</button>
      </nav>
      <excel-ribbon></excel-ribbon>
      <div class="formula">
        <label class="box ref"><input aria-label="名称框" value="D1"><span class="caret"></span></label>
        ${dots}
        <div class="box acts">
          <button aria-label="取消">${icons.cancel}</button>
          <button aria-label="输入">${icons.accept}</button>
          <button class="fx" aria-label="插入函数">fx</button>
        </div>
        <label class="box value"><input aria-label="编辑栏" value="出生日期"></label>
      </div>
      <excel-grid></excel-grid>
      <footer>
        <div class="move">
          <button aria-label="上一个">${icon(6, 10, svg`<path d="M6 0V10L1 5Z" fill="#b8b8b8"/>`)}</button>
          <button aria-label="下一个">${icon(6, 10, svg`<path d="M0 0V10L5 5Z" fill="#b8b8b8"/>`)}</button>
        </div>
        <div class="sheets">
          ${sheets.map(s => html`<button class=${classMap({ on: s === this.sheet })} @click=${() => (this.sheet = s)}>${s}</button>`)}
        </div>
        <button class="add" aria-label="新工作表">${icons.plus}</button>
        <span class="fill"></span>
        <div class="hscroll">
          ${dots}
          <div class="scroll">
            <button class="back" aria-label="向左滚动">${icon(7, 12, svg`<path d="M7 0V12L1 6Z" fill="#6a6a6a"/>`)}</button>
            <button class="thumb" aria-label="滚动条"></button>
            <button class="fwd" aria-label="向右滚动"></button>
          </div>
        </div>
      </footer>`;
  }
}
